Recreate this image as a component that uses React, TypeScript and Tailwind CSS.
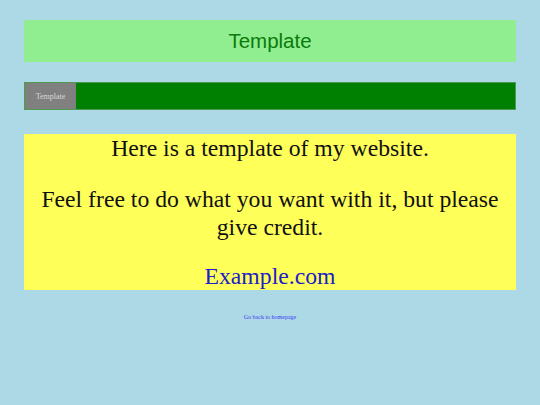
export default function App() {
  return (
    <div className="min-h-[405px] w-full bg-[#add8e6] px-[24px] pt-[20px]" style={{ fontFamily: '"Liberation Serif", serif' }}>
      <div className="flex h-[42px] items-center justify-center bg-[#90ee90]">
        <span className="text-[20.5px] text-[#0a7a0a]" style={{ fontFamily: '"Liberation Sans", Arial, sans-serif' }}>Template</span>
      </div>
      <div className="mt-[20px] flex h-[28px] border border-[#4f9a4f] bg-[#008000]">
        <div className="flex w-[51px] items-center justify-center bg-[#808080] pt-[2px] text-[8px] text-[#d8d8d8]">Template</div>
      </div>
      <div className="mt-[24px] bg-[#ffff5a] text-center text-[23.7px] leading-[28px] text-[#111]">
        <p>Here is a template of my website.</p>
        <p className="mt-[23px]">Feel free to do what you want with it, but please give credit.</p>
        <p className="mt-[21px] text-[#2020c8]">Example.com</p>
      </div>
      <div className="mt-[23px] text-center text-[6px] leading-[8px] text-[#3a3af0]">Go back to homepage</div>
    </div>
  );
}
